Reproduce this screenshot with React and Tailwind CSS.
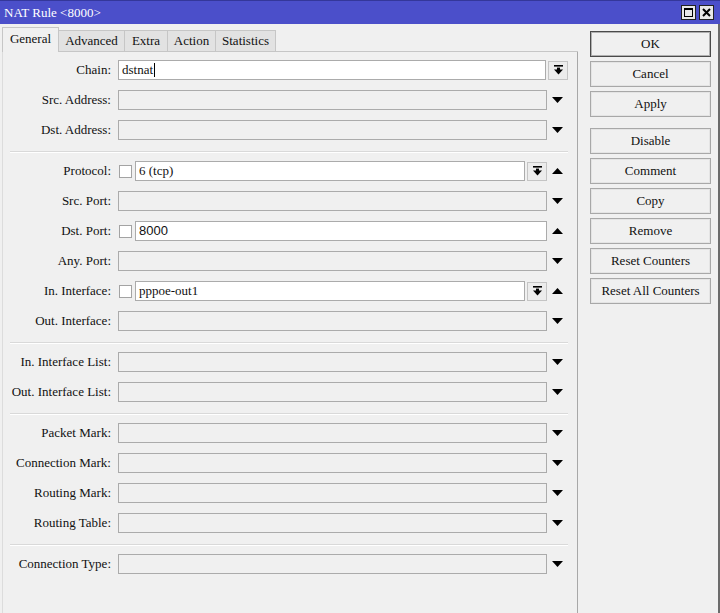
import React from "react";

const FONT = { fontFamily: '"Liberation Serif", "Times New Roman", serif' };

function TriDown() {
  return (
    <svg width="11" height="6" viewBox="0 0 11 6">
      <polygon points="0,0 11,0 5.5,6" fill="#000" />
    </svg>
  );
}
function TriUp() {
  return (
    <svg width="11" height="6" viewBox="0 0 11 6">
      <polygon points="0,6 11,6 5.5,0" fill="#000" />
    </svg>
  );
}
function ComboBtn() {
  return (
    <div className="w-[20px] h-[19px] border border-[#c4c4c4] bg-[#ececec] flex items-center justify-center shrink-0">
      <svg width="9" height="10" viewBox="0 0 9 10">
        <rect x="0" y="0" width="9" height="1.6" fill="#000" />
        <rect x="3" y="2.6" width="3" height="2.4" fill="#000" />
        <polygon points="0,4.6 9,4.6 4.5,9.5" fill="#000" />
      </svg>
    </div>
  );
}
function Check() {
  return <div className="w-[13px] h-[13px] ml-px mr-[3px] border border-[#a3a3a3] bg-white shrink-0" />;
}
function Input({ value, white, sans, cursor, className = "" }) {
  return (
    <div
      className={`h-[20px] border border-[#ababab] flex items-center pl-[3px] text-[13px] text-[#111] ${white ? "bg-white" : "bg-[#f0f0f0]"} ${className}`}
      style={sans ? { fontFamily: '"Liberation Sans", Arial, sans-serif' } : undefined}
    >
      {value}
      {cursor && <span className="inline-block w-px h-[14px] bg-black ml-px" />}
    </div>
  );
}

function Row({ label, children, arrow }) {
  return (
    <div className="flex items-center h-[30px]">
      <div className="w-[108px] text-right text-[13px] text-[#111] whitespace-nowrap">{label}</div>
      <div className="ml-[7px] w-[429px] flex items-center">{children}</div>
      <div className="w-[21px] flex justify-center">
        {arrow === "down" && <TriDown />}
        {arrow === "up" && <TriUp />}
      </div>
    </div>
  );
}

function Sep() {
  return (
    <div className="h-[11px] pt-[6px] pl-[7px] pr-[9px]">
      <div className="h-px bg-[#d9d9d9]" />
      <div className="h-px bg-white" />
    </div>
  );
}

function Btn({ children, primary, className = "" }) {
  return (
    <div
      className={`h-[26px] w-[121px] flex items-center justify-center text-[13px] text-[#111] bg-[#f0f0f0] ${
        primary
          ? "border border-[#4a4a4a] shadow-[inset_0_0_0_1px_#b0b0b0]"
          : "border border-[#a8a8a8] shadow-[inset_0_0_0_1px_#e4e4e4]"
      } ${className}`}
    >
      {children}
    </div>
  );
}

export default function App() {
  return (
    <div className="w-[720px] h-[613px] bg-[#f0f0f0] flex flex-col overflow-hidden" style={FONT}>
      {/* Title bar */}
      <div className="h-[24px] bg-[#4b4fca] border-t border-[#34379a] flex items-center pl-[4px] pr-[6px] shrink-0">
        <div className="text-white text-[13px] flex-1">NAT Rule &lt;8000&gt;</div>
        <div className="flex gap-[3px]">
          <div className="w-[15px] h-[15px] bg-[#e8e8e8] border border-[#222] flex items-center justify-center">
            <div className="w-[9px] h-[9px] border border-black border-t-2" />
          </div>
          <div className="w-[15px] h-[15px] bg-[#e8e8e8] border border-[#222] flex items-center justify-center">
            <svg width="9" height="9" viewBox="0 0 9 9">
              <path d="M1 1 L8 8 M8 1 L1 8" stroke="#000" strokeWidth="2" />
            </svg>
          </div>
        </div>
      </div>

      <div className="flex flex-1 border-r-2 border-[#6b6b6b]">
        {/* Left column */}
        <div className="w-[578px] flex flex-col">
          <div className="flex items-end h-[25px] mt-[3px] pl-[2px] text-[13px] text-[#111]">
            <div className="w-[57px] h-[25px] border-l border-t border-r border-[#c6c6c6] flex items-center justify-center pb-[3px] bg-[#f0f0f0]">
              General
            </div>
            <div className="w-[66px] h-[22px] border-t border-r border-b border-[#c6c6c6] bg-[#e2e2e2] flex items-center justify-center">
              Advanced
            </div>
            <div className="w-[43px] h-[22px] border-t border-r border-b border-[#c6c6c6] bg-[#e2e2e2] flex items-center justify-center">
              Extra
            </div>
            <div className="w-[48px] h-[22px] border-t border-r border-b border-[#c6c6c6] bg-[#e2e2e2] flex items-center justify-center">
              Action
            </div>
            <div className="w-[60px] h-[22px] border-t border-r border-b border-[#c6c6c6] bg-[#e2e2e2] flex items-center justify-center">
              Statistics
            </div>
            <div className="flex-1 h-[22px] border-b border-[#c6c6c6]" />
          </div>
          <div className="flex-1 ml-[2px] border-l border-r border-l-[#dcdcdc] border-r-[#a8a8a8] pt-[3px]">
            <div className="flex items-center h-[30px]">
              <div className="w-[108px] text-right text-[13px] text-[#111]">Chain:</div>
              <div className="ml-[7px] flex items-center">
                <Input value="dstnat" white cursor className="w-[428px]" />
                <div className="ml-[2px]">
                  <ComboBtn />
                </div>
              </div>
            </div>
            <Row label="Src. Address:" arrow="down">
              <Input className="w-full" />
            </Row>
            <Row label="Dst. Address:" arrow="down">
              <Input className="w-full" />
            </Row>
            <Sep />
            <Row label="Protocol:" arrow="up">
              <Check />
              <Input value="6 (tcp)" white className="flex-1" />
              <div className="ml-[2px]">
                <ComboBtn />
              </div>
            </Row>
            <Row label="Src. Port:" arrow="down">
              <Input className="w-full" />
            </Row>
            <Row label="Dst. Port:" arrow="up">
              <Check />
              <Input value="8000" white sans className="flex-1" />
            </Row>
            <Row label="Any. Port:" arrow="down">
              <Input className="w-full" />
            </Row>
            <Row label="In. Interface:" arrow="up">
              <Check />
              <Input value="pppoe-out1" white className="flex-1" />
              <div className="ml-[2px]">
                <ComboBtn />
              </div>
            </Row>
            <Row label="Out. Interface:" arrow="down">
              <Input className="w-full" />
            </Row>
            <Sep />
            <Row label="In. Interface List:" arrow="down">
              <Input className="w-full" />
            </Row>
            <Row label="Out. Interface List:" arrow="down">
              <Input className="w-full" />
            </Row>
            <Sep />
            <Row label="Packet Mark:" arrow="down">
              <Input className="w-full" />
            </Row>
            <Row label="Connection Mark:" arrow="down">
              <Input className="w-full" />
            </Row>
            <Row label="Routing Mark:" arrow="down">
              <Input className="w-full" />
            </Row>
            <Row label="Routing Table:" arrow="down">
              <Input className="w-full" />
            </Row>
            <Sep />
            <Row label="Connection Type:" arrow="down">
              <Input className="w-full" />
            </Row>
          </div>
        </div>

        {/* Right buttons */}
        <div className="ml-[12px] pt-[7px] flex flex-col gap-[4px]">
          <Btn primary>OK</Btn>
          <Btn>Cancel</Btn>
          <Btn>Apply</Btn>
          <Btn className="mt-[7px]">Disable</Btn>
          <Btn>Comment</Btn>
          <Btn>Copy</Btn>
          <Btn>Remove</Btn>
          <Btn>Reset Counters</Btn>
          <Btn>Reset All Counters</Btn>
        </div>
      </div>
    </div>
  );
}
